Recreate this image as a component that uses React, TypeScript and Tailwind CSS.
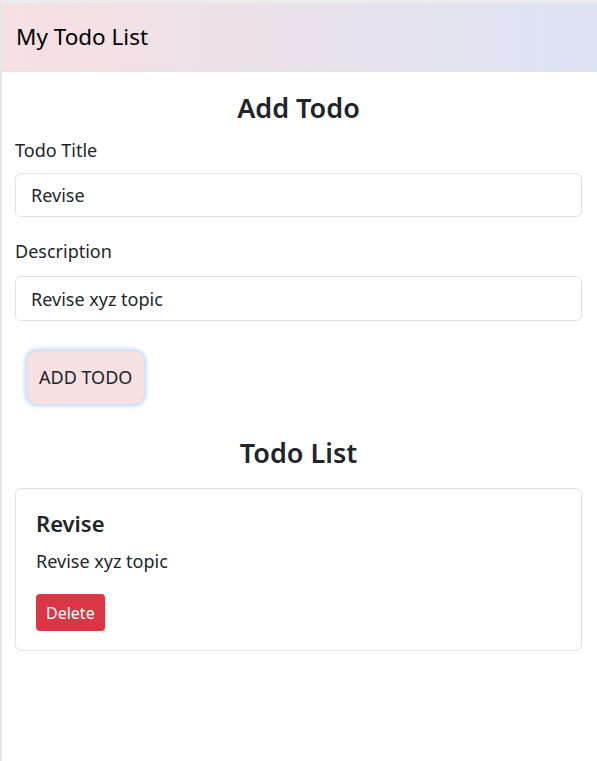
import { useState } from 'react'

type Todo = { sno: number; title: string; desc: string }

export default function App() {
  const [title, setTitle] = useState('Revise')
  const [desc, setDesc] = useState('Revise xyz topic')
  const [todos, setTodos] = useState<Todo[]>([{ sno: 1, title: 'Revise', desc: 'Revise xyz topic' }])

  function addTodo(e: React.FormEvent) {
    e.preventDefault()
    if (!title || !desc) return
    setTodos([...todos, { sno: todos.length + 1, title, desc }])
  }

  function onDelete(t: Todo) {
    setTodos(todos.filter(x => x !== t))
  }

  return (
    <div
      className="min-h-[761px] bg-white border-t-[3px] border-t-[#ececec] border-l-2 border-l-[#e6e6e6] text-[#212529]"
      style={{ fontFamily: '"Noto Sans", "Open Sans", sans-serif' }}
    >
      {/* Navbar */}
      <nav className="h-[69px] flex items-center px-[14px] bg-gradient-to-r from-[#f6e0e2] to-[#dce3f3] border-b border-[#e3e3e3]">
        <span className="text-[22.5px] text-black leading-[30px]">My Todo List</span>
      </nav>

      <div className="pl-[13px] pr-[15px]">
        {/* Add Todo */}
        <h3 className="text-center text-[27px] font-semibold mt-[19px] leading-[34px]">Add Todo</h3>
        <form onSubmit={addTodo}>
          <label className="block text-[18px] leading-[27px] mt-[12px]">Todo Title</label>
          <input
            value={title}
            onChange={e => setTitle(e.target.value)}
            className="block w-full h-[44px] mt-[9px] px-[15px] text-[18px] border border-[#dee2e6] rounded-[6px] outline-none"
          />
          <label className="block text-[18px] leading-[27px] mt-[21px]">Description</label>
          <input
            value={desc}
            onChange={e => setDesc(e.target.value)}
            className="block w-full h-[45px] mt-[11px] px-[15px] text-[18px] border border-[#dee2e6] rounded-[6px] outline-none"
          />
          <button
            type="submit"
            className="block mt-[30px] ml-[12px] h-[53px] px-[12px] bg-[#f6e0e2] rounded-[10px] text-[18px] text-[#212529] shadow-[0_0_0_1px_#cfe0fd,0_0_4px_2px_#bdd4fb]"
          >
            ADD TODO
          </button>
        </form>

        {/* Todo List */}
        <h3 className="text-center text-[27px] font-semibold mt-[32px] leading-[34px]">Todo List</h3>
        <div className="mt-[18px] space-y-3">
          {todos.map(t => (
            <div key={t.sno} className="border border-[#dee2e6] rounded-[6px] px-[20px] pt-[21px] pb-[19px]">
              <h5 className="text-[22px] font-semibold leading-[26px]">{t.title}</h5>
              <p className="text-[18px] leading-[27px] mt-[12px]">{t.desc}</p>
              <button
                onClick={() => onDelete(t)}
                className="block mt-[19px] h-[37px] px-[10px] bg-[#dc3545] text-white text-[16px] rounded-[4px]"
              >
                Delete
              </button>
            </div>
          ))}
        </div>
      </div>
    </div>
  )
}
